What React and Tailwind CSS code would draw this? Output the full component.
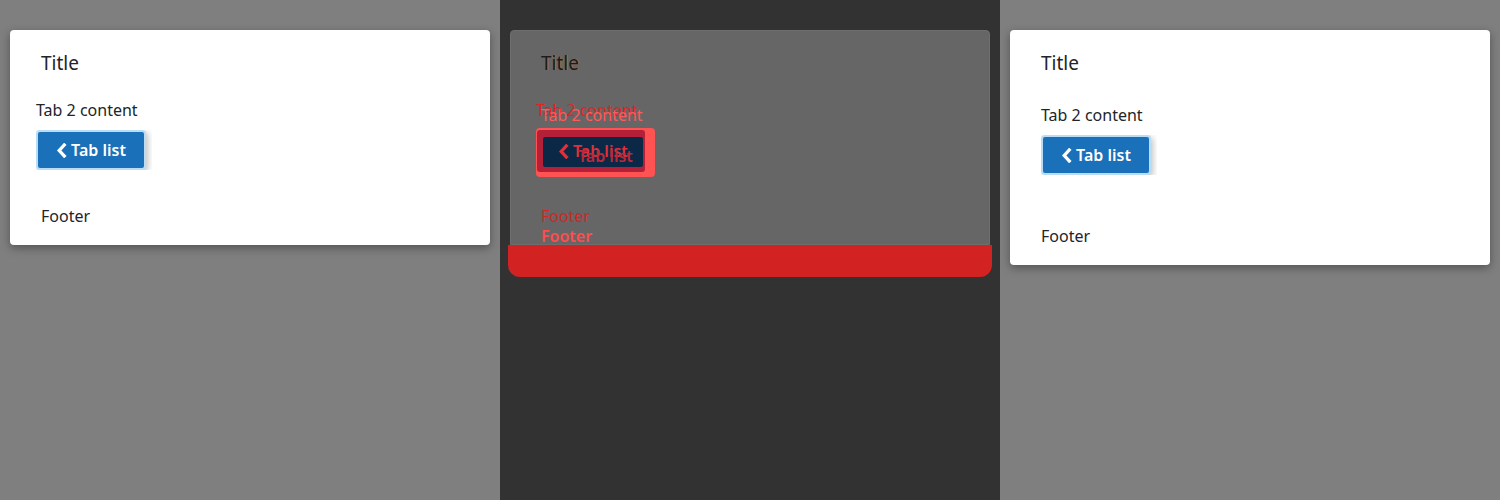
const font = { fontFamily: '"Noto Sans", "Open Sans", sans-serif' };

function Chevron({ className }) {
  return (
    <svg viewBox="0 0 12 16" className={className} fill="none" stroke="currentColor" strokeWidth="3.6" strokeLinecap="square">
      <polyline points="9,2 3.5,8 9,14" />
    </svg>
  );
}

function TabButton() {
  return (
    <div className="w-fit overflow-hidden pr-[6px]">
      <button className="flex h-[40px] w-[110px] items-center justify-center gap-[4px] rounded-[4px] border-2 border-[#b9ddf5] bg-[#1a70b9] text-[16px] font-semibold text-white shadow-[2px_2px_6px_rgba(0,0,0,0.25)]">
        <Chevron className="h-[15px] w-[11px]" />
        Tab list
      </button>
    </div>
  );
}

function Card({ shifted }) {
  return (
    <div className="flex w-[480px] flex-col rounded-[4px] bg-white text-[#212529] shadow-[0_3px_10px_rgba(0,0,0,0.35)]">
      <div className="px-[31px] pt-[20px] text-[19px] leading-[26px]">Title</div>
      <div className={shifted ? 'mt-[29px] px-[31px]' : 'mt-[24px] px-[26px]'}>
        <div className="text-[16px] leading-[20px]">Tab 2 content</div>
        <div className="mt-[10px]">
          <TabButton />
        </div>
      </div>
      <div className={`${shifted ? 'mt-[51px]' : 'mt-[36px]'} px-[31px] pb-[19px] text-[16px] leading-[20px]`}>
        Footer
      </div>
    </div>
  );
}

function DiffCard() {
  return (
    <div className="flex flex-col">
      <div className="relative flex h-[215px] w-[480px] flex-col rounded-t-[4px] border border-[#6e6e6e] bg-[#666666]">
        <div className="px-[30px] pt-[19px] text-[19px] leading-[26px] text-[#1c1c1c] [text-shadow:1px_0_0_rgba(200,120,40,0.6)]">
          Title
        </div>
        {/* expected copy */}
        <div className="mt-[24px] px-[25px]">
          <div className="text-[16px] leading-[20px] text-[#e02424]">Tab 2 content</div>
        </div>
        <div className="mt-[86px] px-[30px] text-[16px] leading-[20px] text-[#d82424]">Footer</div>

        {/* actual copy, drawn over the expected one */}
        <div className="absolute left-[30px] top-[74px] text-[16px] leading-[20px] text-[#ff5a5a]">Tab 2 content</div>
        <div className="absolute left-[25px] top-[97px] h-[49px] w-[119px] rounded-[4px] bg-[#ff5353]" />
        <div className="absolute left-[26px] top-[99px] h-[42px] w-[108px] rounded-[3px] bg-[#b42038]" />
        <div className="absolute left-[32px] top-[106px] h-[30px] w-[100px] rounded-[2px] bg-[#0b2946]" />
        <div className="absolute left-[47px] top-[110px] flex items-center gap-[4px] text-[16px] font-semibold leading-[20px] text-[#e0303a]">
          <Chevron className="h-[15px] w-[11px]" />
          Tab list
        </div>
        <div className="absolute left-[67px] top-[115px] text-[16px] font-semibold leading-[20px] text-[#b82a3a]">Tab list</div>
        <div className="absolute left-[30px] top-[195px] text-[16px] font-semibold leading-[20px] text-[#ff4d4d]">Footer</div>
      </div>
      <div className="-mx-[2px] h-[32px] w-[484px] rounded-b-[12px] bg-[#d22222]" />
    </div>
  );
}

export default function App() {
  return (
    <div className="flex h-[500px] w-[1500px]" style={font}>
      <div className="h-full w-[500px] bg-[#7f7f7f] px-[10px] pt-[30px]">
        <Card />
      </div>
      <div className="h-full w-[500px] bg-[#323232] px-[10px] pt-[30px]">
        <DiffCard />
      </div>
      <div className="h-full w-[500px] bg-[#7f7f7f] px-[10px] pt-[30px]">
        <Card shifted />
      </div>
    </div>
  );
}
